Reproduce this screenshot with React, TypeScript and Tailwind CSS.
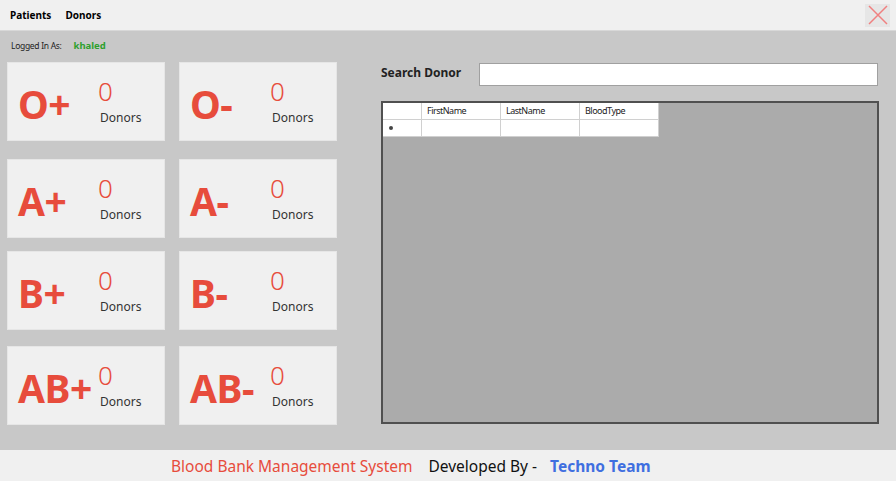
import { FC } from 'react';

const types = [
  ['O+', 'O-'],
  ['A+', 'A-'],
  ['B+', 'B-'],
  ['AB+', 'AB-'],
];

const rowMargins = ['mt-[31px]', 'mt-[18px]', 'mt-[13px]', 'mt-[16px]'];

const BloodCard: FC<{ type: string }> = ({ type }) => (
  <div className="w-[158px] h-[79px] bg-[#f0f0f0] border border-[#e6e6e6] relative">
    <span className="absolute left-[10px] top-[21px] text-[39px] font-bold leading-none text-[#e74c3c] tracking-[-0.5px]">
      {type}
    </span>
    <span className="absolute left-[90px] top-[15px] text-[26px] font-light leading-none text-[#e74c3c]">0</span>
    <span className="absolute left-[92px] top-[49px] text-[12px] leading-none text-[#333]">Donors</span>
  </div>
);

export default function App() {
  return (
    <div className="w-[896px] h-[481px] flex flex-col bg-[#c8c8c8] font-['Noto_Sans',sans-serif] overflow-hidden">
      {/* menu */}
      <div className="h-[31px] bg-[#f0f0f0] flex items-center justify-between border-b border-[#d8d8d8]">
        <div className="flex gap-[14px] pl-[10px] text-[10px] font-bold text-black">
          <span>Patients</span>
          <span>Donors</span>
        </div>
        <div className="w-[25px] h-[23px] mr-[6px] bg-[#e6e6e6] flex items-center justify-center">
          <svg width="20" height="20" viewBox="0 0 20 20">
            <path d="M1 1L19 19M19 1L1 19" stroke="#f08080" strokeWidth="1.5" />
          </svg>
        </div>
      </div>

      <div className="flex-1 relative">
        <div className="absolute left-[11px] top-[8px] flex gap-[12px] items-baseline">
          <span className="text-[8.5px] text-[#222] tracking-[-0.3px]">Logged In As:</span>
          <span className="text-[9.5px] font-bold text-[#2ea02e]">khaled</span>
        </div>

        <div className="flex">
          <div className="pl-[7px] flex flex-col">
            {types.map((row, i) => (
              <div key={i} className={`flex gap-[14px] ${rowMargins[i]}`}>
                {row.map((t) => (
                  <BloodCard key={t} type={t} />
                ))}
              </div>
            ))}
          </div>

          <div className="ml-[44px] mt-[32px] flex flex-col">
            <div className="flex items-center">
              <span className="w-[98px] text-[12px] font-bold text-[#222] -mt-[3px]">Search Donor</span>
              <div className="w-[399px] h-[23px] bg-white border border-[#a0a0a0]" />
            </div>
            <div className="mt-[15px] w-[498px] h-[323px] bg-[#ababab] border-2 border-[#505050]">
              <div className="flex text-[9px] text-[#222] tracking-[-0.5px]">
                <div className="w-[39px] h-[17px] bg-white border-r border-b border-[#d0d0d0]" />
                {['FirstName', 'LastName', 'BloodType'].map((c) => (
                  <div key={c} className="w-[79px] h-[17px] bg-white border-r border-b border-[#d0d0d0] pl-[5px] flex items-center">
                    {c}
                  </div>
                ))}
              </div>
              <div className="flex">
                <div className="w-[39px] h-[17px] bg-white border-r border-b border-[#d0d0d0] flex items-center pl-[6px]">
                  <span className="w-[4px] h-[4px] rounded-full bg-[#444]" />
                </div>
                {[0, 1, 2].map((c) => (
                  <div key={c} className="w-[79px] h-[17px] bg-white border-r border-b border-[#d0d0d0]" />
                ))}
              </div>
            </div>
          </div>
        </div>
      </div>

      {/* footer */}
      <div className="h-[31px] bg-[#f0f0f0] flex items-center pl-[171px] pt-[3px] text-[15.5px]">
        <span className="text-[#e74c3c]">Blood Bank Management System</span>
        <span className="ml-[16px] text-[#111]">Developed By -</span>
        <span className="ml-[13px] font-bold text-[#3f6fe0]">Techno Team</span>
      </div>
    </div>
  );
}
